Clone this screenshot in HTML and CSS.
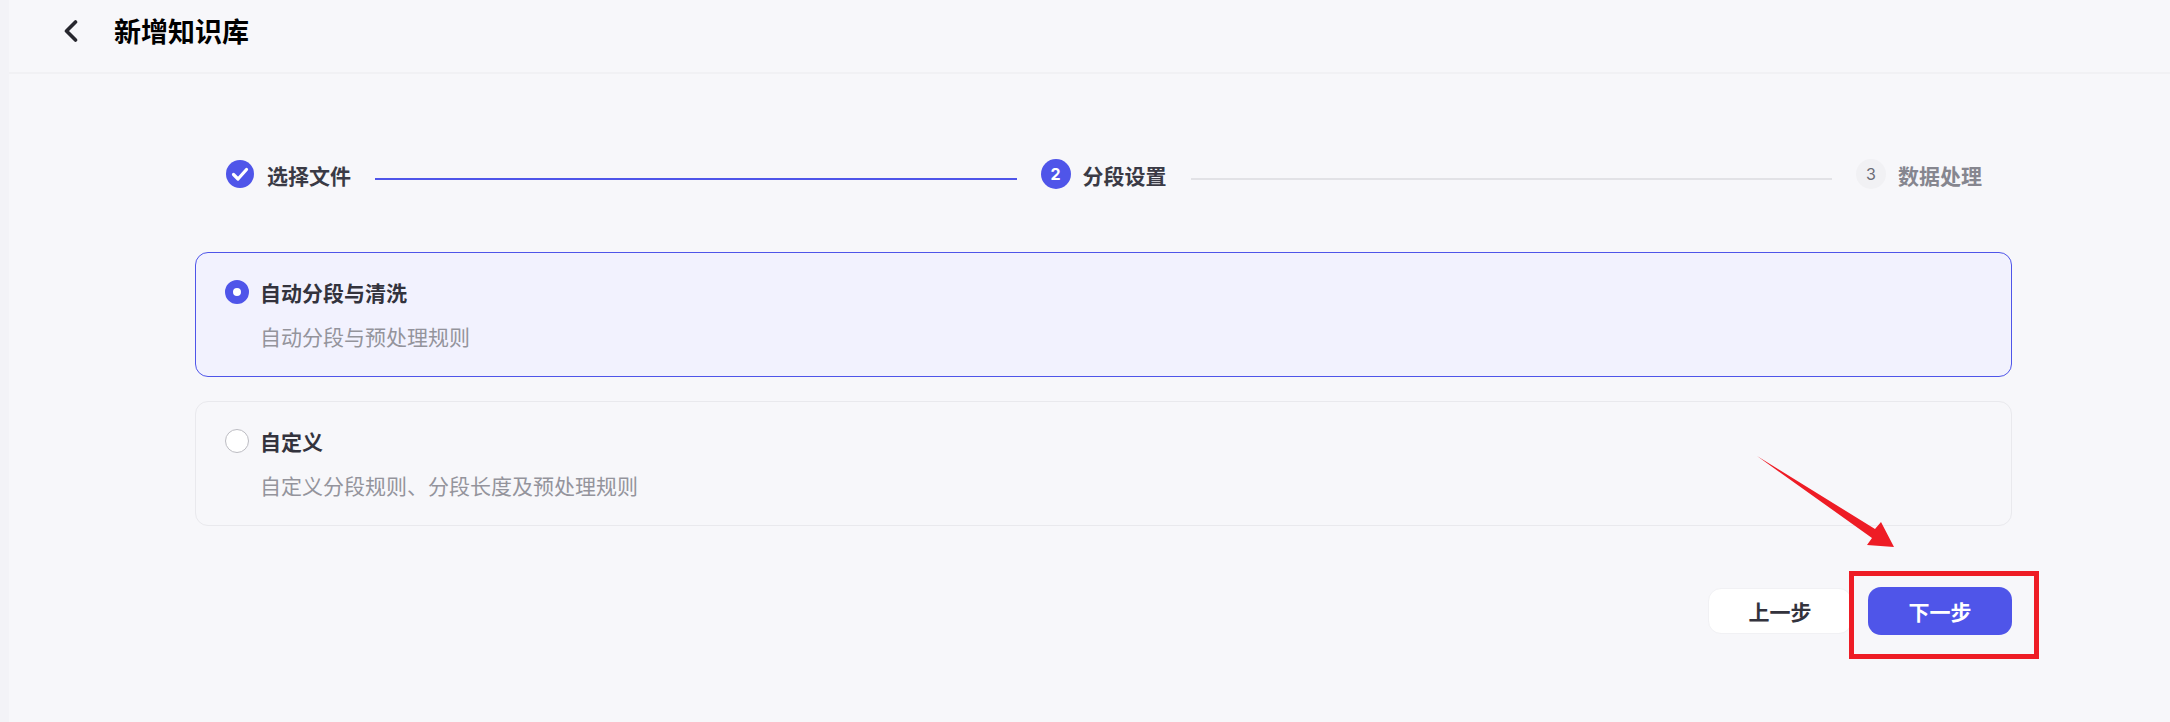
FILE: index.html
```html
<!DOCTYPE html>
<html lang="zh-CN">
<head>
    <meta charset="UTF-8">
    <title>新增知识库</title>
    <link rel="stylesheet" href="styles.css">
</head>
<body>

<div class="side-strip"></div>

<div class="page">
    <!-- Header -->
    <div class="header">
        <svg class="back-icon" width="14" height="22" viewBox="0 0 14 22">
            <path d="M11.5 2 L2.5 11 L11.5 20" fill="none" stroke="#27272e" stroke-width="3.6" stroke-linecap="round" stroke-linejoin="round"/>
        </svg>
        <h1>新增知识库</h1>
    </div>

    <div class="content">
        <!-- Stepper -->
        <div class="stepper">
            <div class="step">
                <svg class="step-icon" width="30" height="30" viewBox="0 0 30 30">
                    <circle cx="15" cy="15" r="14" fill="#4f55e9"/>
                    <path d="M8.5 15.5 L13 20 L21.5 10.5" fill="none" stroke="#fff" stroke-width="3.2" stroke-linecap="round" stroke-linejoin="round"/>
                </svg>
                <span class="step-label">选择文件</span>
            </div>
            <div class="step-line done"></div>
            <div class="step">
                <span class="step-num current">2</span>
                <span class="step-label">分段设置</span>
            </div>
            <div class="step-line"></div>
            <div class="step">
                <span class="step-num todo">3</span>
                <span class="step-label muted">数据处理</span>
            </div>
        </div>

        <!-- Options -->
        <div class="option active">
            <div class="option-title"><span class="radio"></span>自动分段与清洗</div>
            <p class="option-desc">自动分段与预处理规则</p>
        </div>
        <div class="option">
            <div class="option-title"><span class="radio"></span>自定义</div>
            <p class="option-desc">自定义分段规则、分段长度及预处理规则</p>
        </div>

        <!-- Buttons -->
        <div class="actions">
            <button class="btn btn-prev">上一步</button>
            <button class="btn btn-next">下一步</button>
        </div>
    </div>
</div>

<!-- Red annotation over the screenshot -->
<svg class="mark-arrow" width="150" height="110" viewBox="0 0 150 110">
    <path d="M1 1 L119 74 L125 67 L138 92 L111 90 L116 83 Z" fill="#ee1c25"/>
</svg>
<div class="mark-box"></div>

</body>
</html>
```

FILE: styles.css
```css
* {
    margin: 0;
    padding: 0;
    box-sizing: border-box;
}

body {
    display: flex;
    height: 722px;
    overflow: hidden;
    background-color: #f7f7fa;
    color: #33333d;
    font-family: "Noto Sans CJK SC", "Inter", sans-serif;
}

.side-strip {
    width: 9px;
    background-color: #f3f3f7;
}

.page {
    flex: 1;
}

/* Header */
.header {
    display: flex;
    align-items: center;
    height: 74px;
    padding: 0 0 10px 55px;
    border-bottom: 2px solid #f1f1f4;
}

.back-icon {
    margin-right: 36px;
}

.header h1 {
    margin-top: -2px;
    font-size: 27px;
    font-weight: 700;
    color: #000;
}

/* Content */
.content {
    width: 1817px;
    margin-left: 186px;
}

/* Stepper */
.stepper {
    display: flex;
    align-items: center;
    gap: 24px;
    height: 30px;
    margin: 88px 30px 0;
}

.step {
    display: flex;
    align-items: center;
    gap: 12px;
}

.step-icon,
.step-num {
    flex-shrink: 0;
    margin-top: -6px;
}

.step-num {
    display: flex;
    align-items: center;
    justify-content: center;
    width: 30px;
    height: 30px;
    border-radius: 50%;
    font-family: "Inter", sans-serif;
    font-size: 16px;
}

.step-num.current {
    background-color: #4f55e9;
    color: #fff;
    font-weight: 700;
}

.step-num.todo {
    background-color: #f1f1f4;
    color: #6b6b76;
}

.step-label {
    margin-top: -4px;
    font-size: 21px;
    font-weight: 700;
    line-height: 30px;
    color: #3a3a45;
}

.step-label.muted {
    color: #86868f;
}

.step-line {
    flex: 1;
    height: 2px;
    margin-top: 3px;
    background-color: #e2e2e6;
}

.step-line.done {
    background-color: #4f55e9;
}

/* Options */
.option {
    height: 125px;
    margin-bottom: 24px;
    padding: 24px 29px;
    border: 1px solid #e9e9ed;
    border-radius: 13px;
}

.stepper + .option {
    margin-top: 60px;
}

.option.active {
    background-color: #f2f2fe;
    border-color: #4f55e9;
}

.option-title {
    display: flex;
    align-items: center;
    gap: 11px;
    font-size: 21px;
    font-weight: 700;
    line-height: 30px;
    color: #33333d;
}

.radio {
    width: 24px;
    height: 24px;
    background-color: #fff;
    border: 1px solid #bcbcc2;
    border-radius: 50%;
}

.active .radio {
    border: 8px solid #4f55e9;
}

.option-desc {
    margin: 14px 0 0 35px;
    font-size: 21px;
    line-height: 30px;
    color: #94949c;
}

/* Buttons */
.actions {
    display: flex;
    justify-content: flex-end;
    gap: 16px;
    margin-top: 61px;
}

.btn {
    width: 144px;
    height: 48px;
    border-radius: 13px;
    font-family: inherit;
    font-size: 21px;
    font-weight: 700;
}

.btn-prev {
    margin: 1px 0;
    height: 46px;
    background-color: #fff;
    border: 1px solid #f1f1f4;
    color: #33333d;
}

.btn-next {
    background-color: #4f55e9;
    border: none;
    color: #fff;
}

/* Red annotation */
.mark-arrow {
    position: absolute;
    left: 1756px;
    top: 455px;
}

.mark-box {
    position: absolute;
    left: 1849px;
    top: 571px;
    width: 190px;
    height: 88px;
    border: 5px solid #ee1c25;
}
```
